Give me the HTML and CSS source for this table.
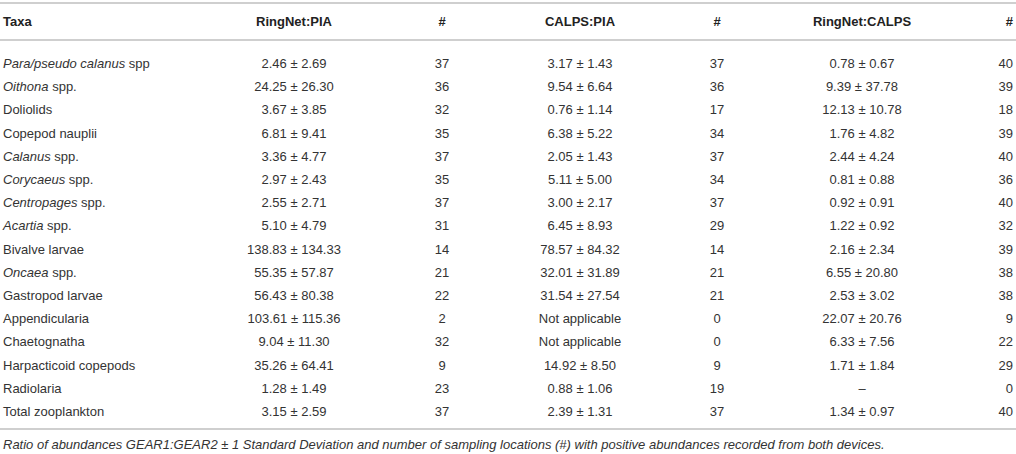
FILE: index.html
```html
<!DOCTYPE html>
<html>
<head>
    <meta charset="utf-8" />
    <title>Ratio of abundances</title>
    <link rel="stylesheet" href="styles.css">
</head>
<body>
    <div id="page-wrapper">
        <table class="ratio-table">
            <colgroup>
                <col class="col-taxa">
                <col class="col-ratio1">
                <col class="col-n1">
                <col class="col-ratio2">
                <col class="col-n2">
                <col class="col-ratio3">
                <col class="col-n3">
            </colgroup>
            <thead>
                <tr>
                    <th class="taxa">Taxa</th>
                    <th>RingNet:PIA</th>
                    <th>#</th>
                    <th>CALPS:PIA</th>
                    <th>#</th>
                    <th>RingNet:CALPS</th>
                    <th class="last">#</th>
                </tr>
            </thead>
            <tbody>
                <tr><td class="taxa"><i>Para/pseudo calanus</i> spp</td><td>2.46 ± 2.69</td><td>37</td><td>3.17 ± 1.43</td><td>37</td><td>0.78 ± 0.67</td><td class="last">40</td></tr>
                <tr><td class="taxa"><i>Oithona</i> spp.</td><td>24.25 ± 26.30</td><td>36</td><td>9.54 ± 6.64</td><td>36</td><td>9.39 ± 37.78</td><td class="last">39</td></tr>
                <tr><td class="taxa">Doliolids</td><td>3.67 ± 3.85</td><td>32</td><td>0.76 ± 1.14</td><td>17</td><td>12.13 ± 10.78</td><td class="last">18</td></tr>
                <tr><td class="taxa">Copepod nauplii</td><td>6.81 ± 9.41</td><td>35</td><td>6.38 ± 5.22</td><td>34</td><td>1.76 ± 4.82</td><td class="last">39</td></tr>
                <tr><td class="taxa"><i>Calanus</i> spp.</td><td>3.36 ± 4.77</td><td>37</td><td>2.05 ± 1.43</td><td>37</td><td>2.44 ± 4.24</td><td class="last">40</td></tr>
                <tr><td class="taxa"><i>Corycaeus</i> spp.</td><td>2.97 ± 2.43</td><td>35</td><td>5.11 ± 5.00</td><td>34</td><td>0.81 ± 0.88</td><td class="last">36</td></tr>
                <tr><td class="taxa"><i>Centropages</i> spp.</td><td>2.55 ± 2.71</td><td>37</td><td>3.00 ± 2.17</td><td>37</td><td>0.92 ± 0.91</td><td class="last">40</td></tr>
                <tr><td class="taxa"><i>Acartia</i> spp.</td><td>5.10 ± 4.79</td><td>31</td><td>6.45 ± 8.93</td><td>29</td><td>1.22 ± 0.92</td><td class="last">32</td></tr>
                <tr><td class="taxa">Bivalve larvae</td><td>138.83 ± 134.33</td><td>14</td><td>78.57 ± 84.32</td><td>14</td><td>2.16 ± 2.34</td><td class="last">39</td></tr>
                <tr><td class="taxa"><i>Oncaea</i> spp.</td><td>55.35 ± 57.87</td><td>21</td><td>32.01 ± 31.89</td><td>21</td><td>6.55 ± 20.80</td><td class="last">38</td></tr>
                <tr><td class="taxa">Gastropod larvae</td><td>56.43 ± 80.38</td><td>22</td><td>31.54 ± 27.54</td><td>21</td><td>2.53 ± 3.02</td><td class="last">38</td></tr>
                <tr><td class="taxa">Appendicularia</td><td>103.61 ± 115.36</td><td>2</td><td>Not applicable</td><td>0</td><td>22.07 ± 20.76</td><td class="last">9</td></tr>
                <tr><td class="taxa">Chaetognatha</td><td>9.04 ± 11.30</td><td>32</td><td>Not applicable</td><td>0</td><td>6.33 ± 7.56</td><td class="last">22</td></tr>
                <tr><td class="taxa">Harpacticoid copepods</td><td>35.26 ± 64.41</td><td>9</td><td>14.92 ± 8.50</td><td>9</td><td>1.71 ± 1.84</td><td class="last">29</td></tr>
                <tr><td class="taxa">Radiolaria</td><td>1.28 ± 1.49</td><td>23</td><td>0.88 ± 1.06</td><td>19</td><td>–</td><td class="last">0</td></tr>
                <tr><td class="taxa">Total zooplankton</td><td>3.15 ± 2.59</td><td>37</td><td>2.39 ± 1.31</td><td>37</td><td>1.34 ± 0.97</td><td class="last">40</td></tr>
            </tbody>
        </table>
        <p class="caption">Ratio of abundances GEAR1:GEAR2 ± 1 Standard Deviation and number of sampling locations (#) with positive abundances recorded from both devices.</p>
    </div>
</body>
</html>
```

FILE: styles.css
```css
*, *:before, *:after{
    box-sizing:border-box;
}
html{
    background:#fff;
    color:#333;
    font-family:"Liberation Sans", Arial, sans-serif;
    -webkit-font-smoothing:antialiased;
}
body{
    margin:0;
}
#page-wrapper{
    width:1016px;
    padding-top:2px;
}
.ratio-table{
    width:100%;
    table-layout:fixed;
    border-collapse:collapse;
    font-size:13px;
    border-top:2px solid #cfcfcf;
    border-bottom:2px solid #cfcfcf;
}
.col-taxa{ width:220px; }
.col-ratio1{ width:148px; }
.col-n1{ width:148px; }
.col-ratio2{ width:128px; }
.col-n2{ width:146px; }
.col-ratio3{ width:144px; }
.col-n3{ width:82px; }
.ratio-table th{
    height:37px;
    padding:0 3px;
    font-weight:bold;
    color:#222;
    text-align:center;
    border-bottom:2px solid #cfcfcf;
}
.ratio-table td{
    padding:0 3px;
    line-height:23.2px;
    text-align:center;
    white-space:nowrap;
}
    .ratio-table tbody tr:first-child td{
        padding-top:11px;
    }
    .ratio-table tbody tr:last-child td{
        padding-bottom:5px;
    }
.ratio-table .taxa{
    text-align:left;
}
.ratio-table .last{
    text-align:right;
}
.caption{
    margin:7px 0 0 3px;
    font-size:13px;
    font-style:italic;
    color:#333;
}
```
